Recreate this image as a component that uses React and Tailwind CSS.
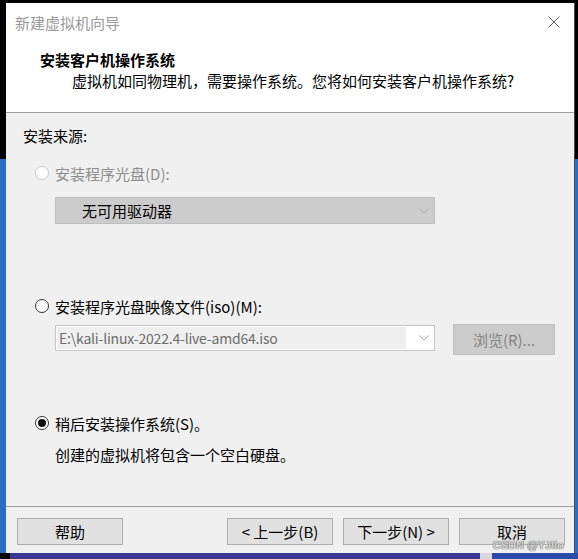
import { useState } from 'react'

const font = "font-['Microsoft_YaHei','Noto_Sans_CJK_SC',sans-serif]"

function Radio({ checked, disabled, onClick }) {
  return (
    <span
      onClick={onClick}
      className={`flex h-[14px] w-[14px] shrink-0 items-center justify-center rounded-full border bg-white ${
        disabled ? 'border-[#cccccc] bg-[#fcfcfc]' : 'border-[#333333]'
      }`}
    >
      {checked && <span className="h-[8px] w-[8px] rounded-full bg-[#111111]" />}
    </span>
  )
}

function Chevron() {
  return (
    <svg width="10" height="6" viewBox="0 0 10 6" className="shrink-0">
      <polyline points="0.5,0.5 5,5 9.5,0.5" fill="none" stroke="#a8a8a8" strokeWidth="1" />
    </svg>
  )
}

function Button({ children, className = '' }) {
  return (
    <button
      className={`flex h-[27px] w-[106px] items-center justify-center border border-[#adadad] bg-[#e1e1e1] text-[15px] text-black ${className}`}
    >
      {children}
    </button>
  )
}

export default function App() {
  const [choice, setChoice] = useState('later')

  return (
    <div
      className={`relative flex h-[559px] w-[578px] flex-col overflow-hidden bg-[linear-gradient(to_bottom,#000_0,#000_159px,#2b6dc6_159px)] ${font}`}
    >
      <div className="mt-[3px] ml-[6px] flex h-[550px] w-[569px] flex-col border-r border-[#4a4a4a] bg-[#f0f0f0]">
        {/* header */}
        <div className="flex h-[109px] flex-col bg-white">
          <div className="flex h-[38px] items-center justify-between pl-[9px] pr-[14px]">
            <span className="text-[15px] leading-none text-[#9a9a9a]">新建虚拟机向导</span>
            <svg width="12" height="12" viewBox="0 0 12 12">
              <path d="M0.5 0.5 L11.5 11.5 M11.5 0.5 L0.5 11.5" stroke="#666" strokeWidth="1" />
            </svg>
          </div>
          <div className="mt-[8px] flex h-[20px] items-center pl-[34px] text-[15px] font-bold leading-none text-black">
            安装客户机操作系统
          </div>
          <div className="mt-[1px] flex h-[20px] items-center pl-[66px] text-[15px] leading-none text-black">
            虚拟机如同物理机，需要操作系统。您将如何安装客户机操作系统?
          </div>
        </div>
        <div className="h-px bg-[#a0a0a0]" />

        {/* body */}
        <div className="flex flex-1 flex-col text-[15px] leading-none">
          <div className="mt-[12px] flex h-[20px] items-center pl-[17px] text-black">安装来源:</div>

          <div className="mt-[18px] flex h-[20px] items-center gap-[6px] pl-[29px] text-[#8d8d8d]">
            <Radio disabled />
            <span>安装程序光盘(D):</span>
          </div>

          <div className="mt-[14px] ml-[49px] flex h-[27px] w-[380px] items-center justify-between border border-[#bfbfbf] bg-[#cccccc] pl-[26px] pr-[5px] text-black">
            <span>无可用驱动器</span>
            <Chevron />
          </div>

          <div className="mt-[72px] flex h-[20px] items-center gap-[6px] pl-[29px] text-black">
            <Radio checked={choice === 'iso'} onClick={() => setChoice('iso')} />
            <span>安装程序光盘映像文件(iso)(M):</span>
          </div>

          <div className="mt-[8px] flex h-[31px] items-start pl-[49px]">
            <div className="mt-[1px] flex h-[26px] w-[380px] items-center border border-[#c6c6c6] bg-white p-[1px] pr-[5px]">
              <div className="flex h-full flex-1 items-center bg-[#efefef] pl-[2px] text-[14px] tracking-[-0.2px] text-[#6d6d6d]">
                E:\kali-linux-2022.4-live-amd64.iso
              </div>
              <div className="flex w-[23px] justify-end">
                <Chevron />
              </div>
            </div>
            <button className="ml-[18px] flex h-[31px] w-[102px] items-center justify-center border border-[#bfbfbf] bg-[#cccccc] text-[#848484]">
              浏览(R)...
            </button>
          </div>

          <div className="mt-[58px] flex h-[20px] items-center gap-[6px] pl-[29px] text-black">
            <Radio checked={choice === 'later'} onClick={() => setChoice('later')} />
            <span>稍后安装操作系统(S)。</span>
          </div>

          <div className="mt-[11px] flex h-[20px] items-center pl-[49px] text-black">
            创建的虚拟机将包含一个空白硬盘。
          </div>

          <div className="mt-[42px] h-px bg-[#a0a0a0]" />

          <div className="mt-[11px] flex pl-[11px]">
            <Button>帮助</Button>
            <Button className="ml-[104px]">&lt; 上一步(B)</Button>
            <Button className="ml-[10px]">下一步(N) &gt;</Button>
            <Button className="ml-[10px]">取消</Button>
          </div>
        </div>
      </div>

      <div className="flex h-[6px]">
        <div className="w-[10px] bg-black" />
        <div className="flex-1 bg-[#3a3893]" />
        <div className="w-[12px] bg-[#d8d8e0]" />
        <div className="w-[86px] bg-[#2c4aa8]" />
      </div>

      <span className="absolute bottom-[8px] right-[14px] font-['Liberation_Sans',sans-serif] text-[11px] font-bold leading-none text-[#d6d6d6] [text-shadow:0_0_1px_#606060,0_0_1px_#606060]">
        CSDN @YJlio
      </span>
    </div>
  )
}
